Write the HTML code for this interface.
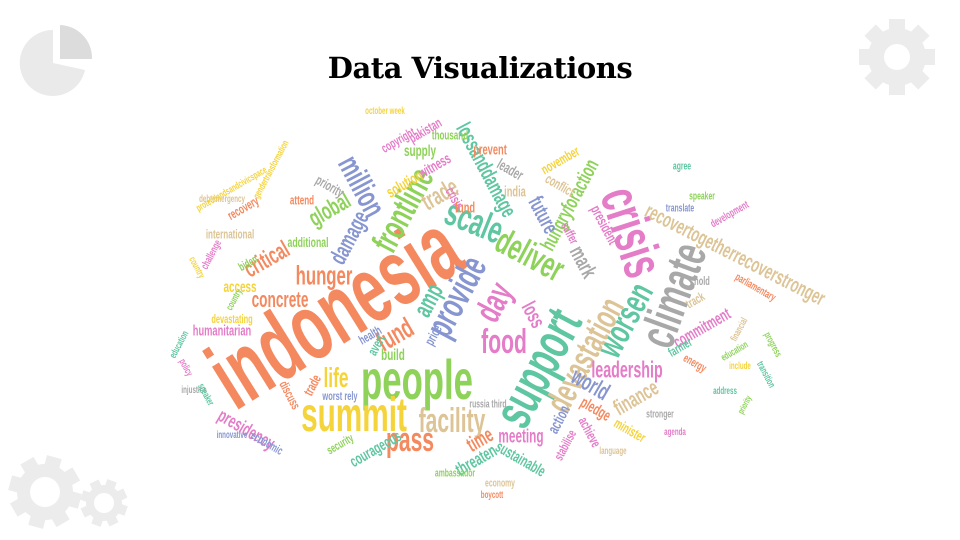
<!DOCTYPE html>
<html><head><meta charset="utf-8"><style>
html,body{margin:0;padding:0;background:#fff;}
#p{position:relative;width:960px;height:540px;overflow:hidden;background:#fff;}
h1{position:absolute;left:0;width:960px;top:51px;margin:0;text-align:center;font:bold 29px "DejaVu Serif","Liberation Serif",serif;color:#000;letter-spacing:-0.5px;}
.w{position:absolute;white-space:nowrap;line-height:1;font-family:"Liberation Sans",sans-serif;font-weight:bold;transform-origin:center;}
.w span{display:inline-block;transform:scaleX(0.62);}
.o{color:#f4895f}.g{color:#8ed25a}.y{color:#f5d33a}.t{color:#dcc496}.k{color:#e47cc8}.c{color:#5ec6a0}.b{color:#8796d0}.r{color:#a8a8a8}
</style></head><body><div id="p">
<svg style="position:absolute;left:0;top:0" width="960" height="540">
 <path d="M53 30 A33 33 0 1 0 85 70 L53 63 Z" fill="#eaeaea"/>
 <path d="M60 25 A33 33 0 0 1 92 59 L60 59 Z" fill="#dcdcdc"/>
 <g fill="#ececec">
  <defs><g id="t8"><rect x="-8" y="-38" width="16" height="14"/><rect x="-8" y="24" width="16" height="14"/><rect x="-38" y="-8" width="14" height="16"/><rect x="24" y="-8" width="14" height="16"/></g></defs>
  <g transform="translate(897,57)">
   <circle r="29"/>
   <use href="#t8"/>
   <use href="#t8" transform="rotate(45)"/>
   <circle r="13" fill="#fff"/>
  </g>
  <g transform="translate(45,492)">
   <circle r="28"/>
   <use href="#t8" transform="rotate(15) scale(0.95)"/>
   <use href="#t8" transform="rotate(60) scale(0.95)"/>
   <circle r="15" fill="#fff"/>
  </g>
  <g transform="translate(104,503)">
   <circle r="18"/>
   <use href="#t8" transform="rotate(20) scale(0.62)"/>
   <use href="#t8" transform="rotate(65) scale(0.62)"/>
   <circle r="10" fill="#fff"/>
  </g>
 </g>
</svg>
<h1>Data Visualizations</h1>

<div class="w o" style="left:335px;top:312px;font-size:95px;transform:translate(-50%,-50%) rotate(-32deg)"><span>indonesia</span></div>
<div class="w g" style="left:417px;top:380px;font-size:56px;transform:translate(-50%,-50%)"><span>people</span></div>
<div class="w y" style="left:354px;top:416px;font-size:48px;transform:translate(-50%,-50%)"><span>summit</span></div>
<div class="w t" style="left:452px;top:421px;font-size:34px;transform:translate(-50%,-50%)"><span>facility</span></div>
<div class="w o" style="left:410px;top:440px;font-size:34px;transform:translate(-50%,-50%)"><span>pass</span></div>
<div class="w k" style="left:632px;top:232px;font-size:56px;transform:translate(-50%,-50%) rotate(72deg)"><span>crisis</span></div>
<div class="w r" style="left:673px;top:295px;font-size:50px;transform:translate(-50%,-50%) rotate(-70deg)"><span>climate</span></div>
<div class="w c" style="left:538px;top:368px;font-size:54px;transform:translate(-50%,-50%) rotate(-62deg)"><span>support</span></div>
<div class="w t" style="left:585px;top:355px;font-size:36px;transform:translate(-50%,-50%) rotate(-62deg)"><span>devastation</span></div>
<div class="w c" style="left:625px;top:320px;font-size:36px;transform:translate(-50%,-50%) rotate(-62deg)"><span>worsen</span></div>
<div class="w k" style="left:504px;top:342px;font-size:34px;transform:translate(-50%,-50%)"><span>food</span></div>
<div class="w g" style="left:530px;top:255px;font-size:36px;transform:translate(-50%,-50%) rotate(28deg)"><span>deliver</span></div>
<div class="w c" style="left:474px;top:222px;font-size:38px;transform:translate(-50%,-50%) rotate(22deg)"><span>scale</span></div>
<div class="w b" style="left:457px;top:297px;font-size:38px;transform:translate(-50%,-50%) rotate(-62deg)"><span>provide</span></div>
<div class="w k" style="left:494px;top:302px;font-size:36px;transform:translate(-50%,-50%) rotate(-62deg)"><span>day</span></div>
<div class="w g" style="left:403px;top:210px;font-size:36px;transform:translate(-50%,-50%) rotate(-62deg)"><span>frontline</span></div>
<div class="w b" style="left:362px;top:186px;font-size:32px;transform:translate(-50%,-50%) rotate(62deg)"><span>million</span></div>
<div class="w t" style="left:735px;top:255px;font-size:21px;transform:translate(-50%,-50%) rotate(27deg)"><span>recovertogetherrecoverstronger</span></div>
<div class="w k" style="left:627px;top:370px;font-size:23px;transform:translate(-50%,-50%)"><span>leadership</span></div>
<div class="w o" style="left:324px;top:276px;font-size:27px;transform:translate(-50%,-50%)"><span>hunger</span></div>
<div class="w o" style="left:280px;top:300px;font-size:22px;transform:translate(-50%,-50%)"><span>concrete</span></div>
<div class="w g" style="left:570px;top:205px;font-size:21px;transform:translate(-50%,-50%) rotate(-62deg)"><span>hungryforaction</span></div>
<div class="w t" style="left:440px;top:195px;font-size:25px;transform:translate(-50%,-50%) rotate(-30deg)"><span>trade</span></div>
<div class="w c" style="left:486px;top:170px;font-size:22px;transform:translate(-50%,-50%) rotate(62deg)"><span>lossanddamage</span></div>
<div class="w o" style="left:267px;top:260px;font-size:24px;transform:translate(-50%,-50%) rotate(-30deg)"><span>critical</span></div>
<div class="w b" style="left:350px;top:238px;font-size:24px;transform:translate(-50%,-50%) rotate(-62deg)"><span>damage</span></div>
<div class="w c" style="left:428px;top:300px;font-size:26px;transform:translate(-50%,-50%) rotate(-62deg)"><span>amp</span></div>
<div class="w o" style="left:395px;top:335px;font-size:28px;transform:translate(-50%,-50%) rotate(-30deg)"><span>fund</span></div>
<div class="w g" style="left:330px;top:210px;font-size:24px;transform:translate(-50%,-50%) rotate(-30deg)"><span>global</span></div>
<div class="w y" style="left:336px;top:378px;font-size:28px;transform:translate(-50%,-50%)"><span>life</span></div>
<div class="w b" style="left:590px;top:385px;font-size:24px;transform:translate(-50%,-50%) rotate(30deg)"><span>world</span></div>
<div class="w t" style="left:636px;top:398px;font-size:22px;transform:translate(-50%,-50%) rotate(-30deg)"><span>finance</span></div>
<div class="w k" style="left:702px;top:328px;font-size:17px;transform:translate(-50%,-50%) rotate(-30deg)"><span>commitment</span></div>
<div class="w k" style="left:521px;top:437px;font-size:19px;transform:translate(-50%,-50%)"><span>meeting</span></div>
<div class="w k" style="left:246px;top:430px;font-size:19px;transform:translate(-50%,-50%) rotate(30deg)"><span>presidency</span></div>
<div class="w k" style="left:222px;top:331px;font-size:15px;transform:translate(-50%,-50%)"><span>humanitarian</span></div>
<div class="w b" style="left:543px;top:215px;font-size:22px;transform:translate(-50%,-50%) rotate(62deg)"><span>future</span></div>
<div class="w r" style="left:583px;top:262px;font-size:22px;transform:translate(-50%,-50%) rotate(62deg)"><span>mark</span></div>
<div class="w k" style="left:533px;top:315px;font-size:21px;transform:translate(-50%,-50%) rotate(62deg)"><span>loss</span></div>
<div class="w o" style="left:480px;top:440px;font-size:21px;transform:translate(-50%,-50%) rotate(-30deg)"><span>time</span></div>
<div class="w c" style="left:476px;top:460px;font-size:18px;transform:translate(-50%,-50%) rotate(-30deg)"><span>threaten</span></div>
<div class="w c" style="left:376px;top:450px;font-size:16px;transform:translate(-50%,-50%) rotate(-30deg)"><span>courageous</span></div>
<div class="w g" style="left:393px;top:356px;font-size:16px;transform:translate(-50%,-50%)"><span>build</span></div>
<div class="w y" style="left:240px;top:288px;font-size:16px;transform:translate(-50%,-50%)"><span>access</span></div>
<div class="w g" style="left:420px;top:152px;font-size:16px;transform:translate(-50%,-50%)"><span>supply</span></div>
<div class="w y" style="left:405px;top:185px;font-size:16px;transform:translate(-50%,-50%) rotate(-30deg)"><span>solution</span></div>
<div class="w k" style="left:455px;top:198px;font-size:14px;transform:translate(-50%,-50%) rotate(60deg)"><span>crisis</span></div>
<div class="w o" style="left:465px;top:208px;font-size:15px;transform:translate(-50%,-50%)"><span>fund</span></div>
<div class="w o" style="left:490px;top:150px;font-size:15px;transform:translate(-50%,-50%)"><span>prevent</span></div>
<div class="w r" style="left:510px;top:170px;font-size:15px;transform:translate(-50%,-50%) rotate(30deg)"><span>leader</span></div>
<div class="w t" style="left:515px;top:192px;font-size:15px;transform:translate(-50%,-50%)"><span>india</span></div>
<div class="w y" style="left:560px;top:160px;font-size:14px;transform:translate(-50%,-50%) rotate(-30deg)"><span>november</span></div>
<div class="w t" style="left:560px;top:185px;font-size:14px;transform:translate(-50%,-50%) rotate(30deg)"><span>conflict</span></div>
<div class="w k" style="left:604px;top:225px;font-size:15px;transform:translate(-50%,-50%) rotate(62deg)"><span>president</span></div>
<div class="w k" style="left:570px;top:233px;font-size:13px;transform:translate(-50%,-50%) rotate(62deg)"><span>suffer</span></div>
<div class="w g" style="left:308px;top:242px;font-size:14px;transform:translate(-50%,-50%)"><span>additional</span></div>
<div class="w o" style="left:243px;top:208px;font-size:13px;transform:translate(-50%,-50%) rotate(-30deg)"><span>recovery</span></div>
<div class="w t" style="left:230px;top:234px;font-size:13px;transform:translate(-50%,-50%)"><span>international</span></div>
<div class="w y" style="left:232px;top:319px;font-size:12px;transform:translate(-50%,-50%)"><span>devastating</span></div>
<div class="w t" style="left:222px;top:200px;font-size:10px;transform:translate(-50%,-50%)"><span>debtemergency</span></div>
<div class="w y" style="left:232px;top:190px;font-size:10px;transform:translate(-50%,-50%) rotate(-30deg)"><span>protectlandsandcivicspace</span></div>
<div class="w y" style="left:272px;top:170px;font-size:10px;transform:translate(-50%,-50%) rotate(-62deg)"><span>gendertransformation</span></div>
<div class="w k" style="left:398px;top:140px;font-size:13px;transform:translate(-50%,-50%) rotate(-30deg)"><span>copyright</span></div>
<div class="w k" style="left:425px;top:130px;font-size:14px;transform:translate(-50%,-50%) rotate(-30deg)"><span>pakistan</span></div>
<div class="w g" style="left:450px;top:135px;font-size:13px;transform:translate(-50%,-50%)"><span>thousand</span></div>
<div class="w r" style="left:330px;top:186px;font-size:14px;transform:translate(-50%,-50%) rotate(30deg)"><span>priority</span></div>
<div class="w o" style="left:302px;top:200px;font-size:13px;transform:translate(-50%,-50%)"><span>attend</span></div>
<div class="w k" style="left:435px;top:166px;font-size:15px;transform:translate(-50%,-50%) rotate(-30deg)"><span>witness</span></div>
<div class="w b" style="left:433px;top:335px;font-size:14px;transform:translate(-50%,-50%) rotate(-62deg)"><span>price</span></div>
<div class="w c" style="left:376px;top:345px;font-size:14px;transform:translate(-50%,-50%) rotate(-62deg)"><span>avert</span></div>
<div class="w b" style="left:370px;top:335px;font-size:13px;transform:translate(-50%,-50%) rotate(-30deg)"><span>health</span></div>
<div class="w o" style="left:312px;top:385px;font-size:14px;transform:translate(-50%,-50%) rotate(-62deg)"><span>trade</span></div>
<div class="w o" style="left:290px;top:395px;font-size:13px;transform:translate(-50%,-50%) rotate(62deg)"><span>discuss</span></div>
<div class="w b" style="left:267px;top:443px;font-size:12px;transform:translate(-50%,-50%) rotate(30deg)"><span>economic</span></div>
<div class="w g" style="left:340px;top:444px;font-size:12px;transform:translate(-50%,-50%) rotate(-30deg)"><span>security</span></div>
<div class="w g" style="left:455px;top:474px;font-size:11px;transform:translate(-50%,-50%)"><span>ambassador</span></div>
<div class="w c" style="left:520px;top:460px;font-size:16px;transform:translate(-50%,-50%) rotate(30deg)"><span>sustainable</span></div>
<div class="w b" style="left:560px;top:420px;font-size:16px;transform:translate(-50%,-50%) rotate(-62deg)"><span>action</span></div>
<div class="w o" style="left:595px;top:410px;font-size:16px;transform:translate(-50%,-50%) rotate(30deg)"><span>pledge</span></div>
<div class="w k" style="left:590px;top:432px;font-size:14px;transform:translate(-50%,-50%) rotate(62deg)"><span>achieve</span></div>
<div class="w y" style="left:630px;top:430px;font-size:14px;transform:translate(-50%,-50%) rotate(30deg)"><span>minister</span></div>
<div class="w k" style="left:565px;top:445px;font-size:13px;transform:translate(-50%,-50%) rotate(-62deg)"><span>stabilise</span></div>
<div class="w c" style="left:680px;top:347px;font-size:13px;transform:translate(-50%,-50%) rotate(-30deg)"><span>farmer</span></div>
<div class="w o" style="left:695px;top:363px;font-size:12px;transform:translate(-50%,-50%) rotate(30deg)"><span>energy</span></div>
<div class="w t" style="left:695px;top:300px;font-size:13px;transform:translate(-50%,-50%) rotate(-30deg)"><span>track</span></div>
<div class="w g" style="left:702px;top:197px;font-size:11px;transform:translate(-50%,-50%)"><span>speaker</span></div>
<div class="w b" style="left:680px;top:209px;font-size:11px;transform:translate(-50%,-50%)"><span>translate</span></div>
<div class="w c" style="left:682px;top:167px;font-size:11px;transform:translate(-50%,-50%)"><span>agree</span></div>
<div class="w k" style="left:730px;top:215px;font-size:11px;transform:translate(-50%,-50%) rotate(-30deg)"><span>development</span></div>
<div class="w o" style="left:755px;top:288px;font-size:11px;transform:translate(-50%,-50%) rotate(30deg)"><span>parliamentary</span></div>
<div class="w r" style="left:702px;top:281px;font-size:12px;transform:translate(-50%,-50%)"><span>hold</span></div>
<div class="w r" style="left:660px;top:415px;font-size:11px;transform:translate(-50%,-50%)"><span>stronger</span></div>
<div class="w k" style="left:675px;top:433px;font-size:10px;transform:translate(-50%,-50%)"><span>agenda</span></div>
<div class="w t" style="left:613px;top:452px;font-size:10px;transform:translate(-50%,-50%)"><span>language</span></div>
<div class="w t" style="left:500px;top:484px;font-size:11px;transform:translate(-50%,-50%)"><span>economy</span></div>
<div class="w o" style="left:492px;top:496px;font-size:10px;transform:translate(-50%,-50%)"><span>boycott</span></div>
<div class="w r" style="left:488px;top:405px;font-size:11px;transform:translate(-50%,-50%)"><span>russia third</span></div>
<div class="w b" style="left:340px;top:396px;font-size:12px;transform:translate(-50%,-50%)"><span>worst rely</span></div>
<div class="w b" style="left:232px;top:436px;font-size:10px;transform:translate(-50%,-50%)"><span>innovative</span></div>
<div class="w r" style="left:194px;top:391px;font-size:10px;transform:translate(-50%,-50%)"><span>injustice</span></div>
<div class="w g" style="left:248px;top:263px;font-size:12px;transform:translate(-50%,-50%) rotate(-30deg)"><span>biden</span></div>
<div class="w y" style="left:385px;top:112px;font-size:10px;transform:translate(-50%,-50%)"><span>october week</span></div>
<div class="w c" style="left:180px;top:345px;font-size:10px;transform:translate(-50%,-50%) rotate(-62deg)"><span>education</span></div>
<div class="w k" style="left:185px;top:368px;font-size:10px;transform:translate(-50%,-50%) rotate(62deg)"><span>policy</span></div>
<div class="w c" style="left:205px;top:395px;font-size:10px;transform:translate(-50%,-50%) rotate(62deg)"><span>speaker</span></div>
<div class="w k" style="left:212px;top:255px;font-size:11px;transform:translate(-50%,-50%) rotate(-62deg)"><span>challenge</span></div>
<div class="w y" style="left:196px;top:268px;font-size:10px;transform:translate(-50%,-50%) rotate(62deg)"><span>country</span></div>
<div class="w g" style="left:235px;top:300px;font-size:10px;transform:translate(-50%,-50%) rotate(-62deg)"><span>country</span></div>
<div class="w g" style="left:772px;top:345px;font-size:10px;transform:translate(-50%,-50%) rotate(62deg)"><span>progress</span></div>
<div class="w c" style="left:765px;top:375px;font-size:10px;transform:translate(-50%,-50%) rotate(62deg)"><span>transition</span></div>
<div class="w g" style="left:735px;target:0;top:352px;font-size:10px;transform:translate(-50%,-50%) rotate(-30deg)"><span>education</span></div>
<div class="w y" style="left:740px;top:367px;font-size:10px;transform:translate(-50%,-50%)"><span>include</span></div>
<div class="w c" style="left:725px;top:392px;font-size:10px;transform:translate(-50%,-50%)"><span>address</span></div>
<div class="w g" style="left:745px;top:405px;font-size:9px;transform:translate(-50%,-50%) rotate(-62deg)"><span>priority</span></div>
<div class="w t" style="left:740px;top:330px;font-size:10px;transform:translate(-50%,-50%) rotate(-62deg)"><span>financial</span></div>
</div></body></html>
